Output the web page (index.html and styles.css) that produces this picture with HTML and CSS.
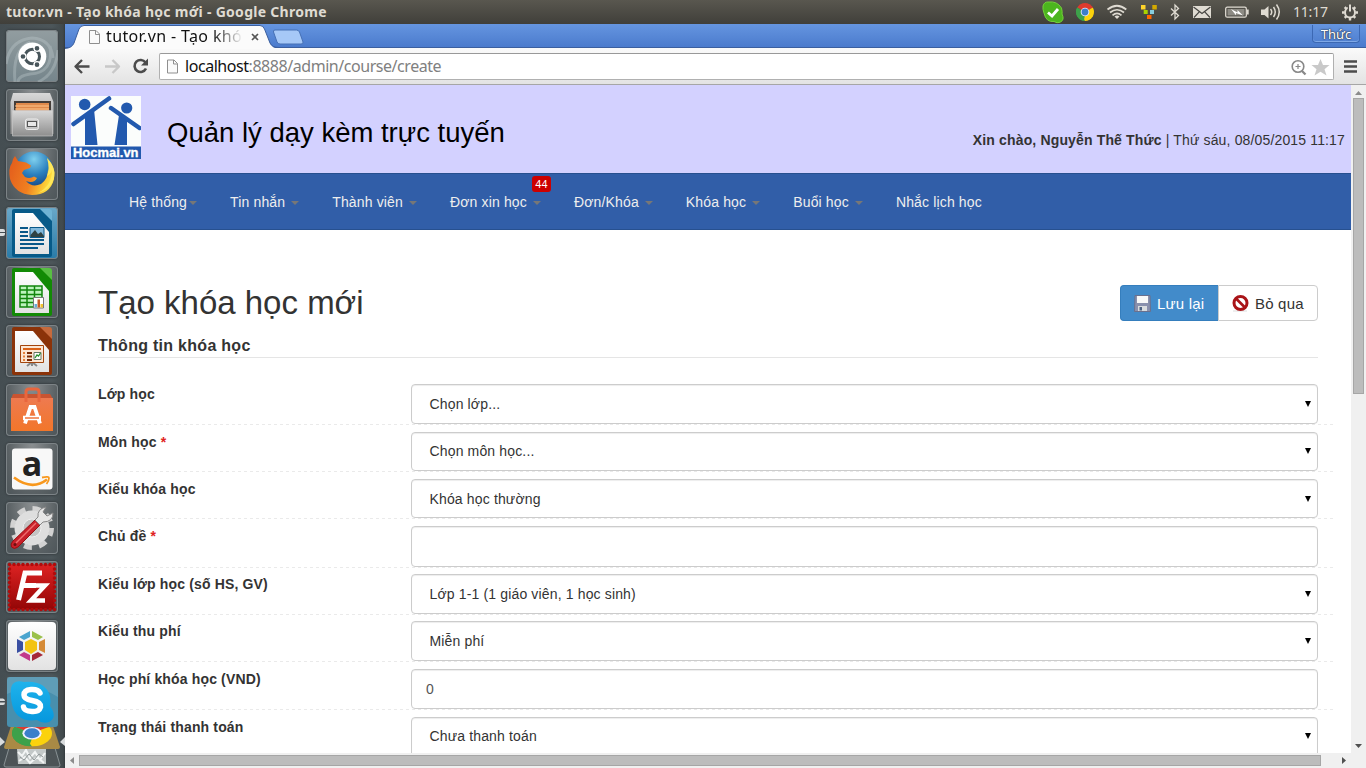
FILE: index.html
```html
<!DOCTYPE html>
<html lang="vi">
<head>
<meta charset="utf-8">
<title>tutor.vn - Tạo khóa học mới</title>
<link rel="stylesheet" href="styles.css">
</head>
<body>
<svg class="defs" width="0" height="0" aria-hidden="true">
  <defs>
    <linearGradient id="gBox" x2="0" y2="1"><stop offset="0" stop-color="#d8d8d8"/><stop offset="1" stop-color="#8e8e8e"/></linearGradient>
    <linearGradient id="gPaper" x2="0" y2="1"><stop offset="0" stop-color="#fff"/><stop offset="1" stop-color="#e2e2e2"/></linearGradient>
    <radialGradient id="gGlobe" cx=".5" cy=".2" r=".8"><stop offset="0" stop-color="#7fd0ee"/><stop offset=".5" stop-color="#2a7fbe"/><stop offset="1" stop-color="#123a78"/></radialGradient>
    <linearGradient id="gFox" x1="0" y1="0" x2="1" y2=".3"><stop offset="0" stop-color="#e2591c"/><stop offset=".6" stop-color="#f08020"/><stop offset="1" stop-color="#ffdc3c"/></linearGradient>
    <linearGradient id="gBag" x2="0" y2="1"><stop offset="0" stop-color="#ee7a50"/><stop offset="1" stop-color="#f2762a"/></linearGradient>
    <linearGradient id="gSkype" x2="0" y2="1"><stop offset="0" stop-color="#1fb3ec"/><stop offset="1" stop-color="#0697dd"/></linearGradient>
    <linearGradient id="gRed" x2="0" y2="1"><stop offset="0" stop-color="#d22"/><stop offset="1" stop-color="#930606"/></linearGradient>
    <symbol id="page" viewBox="0 0 11 14"><path d="M.5 .5H7L10.500 4V13.500H.5Z" fill="#fafafa" stroke="#8f8f8f"/><path d="M6.500 .5V4.500H10.500" fill="none" stroke="#8f8f8f"/></symbol>
    <symbol id="chrome" viewBox="0 0 20 20">
      <path d="M10 10L1.340 5A10 10 0 0 1 18.660 5Z" fill="#dd3a2e"/>
      <path d="M10 10L18.660 5A10 10 0 0 1 10 20Z" fill="#fbd20c"/>
      <path d="M10 10V20A10 10 0 0 1 1.340 5Z" fill="#3da14a"/>
      <path d="M10 5.500H18.900L18 4H9Z" fill="#dd3a2e"/><path d="M6 12L10 20L14 12Z" fill="#fbd20c"/><path d="M1.300 5L6 12.500L10 14L8.500 19.800A10 10 0 0 1 1.300 5Z" fill="#3da14a"/>
      <circle cx="10" cy="10" r="4.800" fill="#eef"/><circle cx="10" cy="10" r="3.800" fill="#3b7fca"/>
    </symbol>
  </defs>
</svg>

<header class="panel">
  <div class="panel-title">tutor.vn - Tạo khóa học mới - Google Chrome</div>
  <div class="tray">
    <svg width="252" height="24" viewBox="0 0 252 24">
      <path d="M7 6Q8 1.500 13 2Q21 1 25.500 8Q26.500 12 26 14Q29 20 24 22.300Q21 23.500 18 21.500Q10 22.500 8 13Q6.500 9 7 6Z" fill="#4cb51e" stroke="#73d03a"/>
      <path d="M12 12.500L16 16L22 9" fill="none" stroke="#fff" stroke-width="2.800"/>
      <use href="#chrome" x="40" y="3" width="18" height="18"/>
      <g fill="none" stroke="#dfdbd2" stroke-width="1.700"><path d="M71.500 9.500Q81 2 90.300 9.500"/><path d="M74 12.500Q81 7 88 12.500"/><path d="M76.500 15.300Q81 11.500 85.500 15.300"/></g>
      <path d="M78.500 16.500Q81 14.700 83.500 16.500L81 19Z" fill="#dfdbd2"/>
      <g><path d="M105 5h4.500v4.500h-4.500z" fill="#ffd42a"/><path d="M116.300 5h4.500v4.500h-4.500z" fill="#d4aa00"/><path d="M107.700 10h4v4h-4z" fill="#aad400"/><path d="M114 10h4v4h-4z" fill="#87cdde"/><path d="M111 15h4.500v4h-4.500z" fill="#ff6600"/></g>
      <path d="M135 8.500L142.500 15.500L139 19V5L142.500 8.500L135 15.500" fill="none" stroke="#dfdbd2" stroke-width="1.300"/>
      <path d="M157 6h18v12h-18z" fill="#dfdbd2"/><path d="M157.500 7L166 13.500L174.500 7M158 17.500L163.500 11.700M174 17.500L168.500 11.700" fill="none" stroke="#454440" stroke-width="1.200"/>
      <rect x="189.700" y="7.200" width="20.600" height="10" rx="1.500" fill="none" stroke="#dfdbd2" stroke-width="1.300"/><path d="M191.500 9h17v6.500h-17z" fill="#8d8b84"/><path d="M211 9.500h1.700v5H211z" fill="#dfdbd2"/><path d="M195 9L201.500 12.500V10L207 15.500L200 13V15.200Z" fill="#fff"/>
      <path d="M225 9.500h3.500L232.500 6v12.500L228.500 15H225z" fill="#dfdbd2"/><path d="M234.500 9Q237 12 234.500 15M237.500 7Q241 12 237.500 17M240.500 4.500Q246 12 240.500 19.500" fill="none" stroke="#dfdbd2" stroke-width="1.500"/>
    </svg>
    <span class="clock">11:17</span>
    <svg class="gear" width="16" height="18" viewBox="0 0 16 18"><circle cx="8" cy="9.500" r="5" fill="none" stroke="#dfdbd2" stroke-width="2"/><g stroke="#dfdbd2" stroke-width="2.400"><path d="M2.700 4.200L4.200 5.700M13.300 4.200L11.800 5.700M0 9.500H2.500M13.500 9.500H16M2.700 14.800L4.200 13.300M13.300 14.800L11.800 13.300M8 15V17.500"/></g><path d="M8 3V8" stroke="#4c4a45" stroke-width="4.500"/><path d="M8 1.500V8.500" stroke="#dfdbd2" stroke-width="2"/></svg>
  </div>
</header>

<div class="desktop">
  <aside class="launcher">
    <svg class="tile tile-home" viewBox="0 0 52 52"><g fill="none" stroke="#c3cdd0" stroke-width="3" opacity=".35"><path d="M0 34Q4 10 26 8Q45 9 47 28"/><path d="M9 52Q6 20 24 12"/><path d="M44 16Q48 43 24 44Q12 46 12 52"/><path d="M52 20Q50 44 32 52"/></g><circle cx="26.300" cy="26.500" r="14" fill="#fff"/><circle cx="26.300" cy="26.500" r="7.200" fill="none" stroke="#48555a" stroke-width="3"/><g fill="#48555a" stroke="#fff" stroke-width="1.300"><circle cx="17" cy="26.500" r="3"/><circle cx="31" cy="18.300" r="3"/><circle cx="31" cy="34.700" r="3"/></g></svg>
    <svg class="tile" viewBox="0 0 52 52"><path d="M7 4H44L47.500 13V45H4.500V13Z" fill="url(#gBox)"/><path d="M8 12h37v10H8z" fill="#443d38"/><path d="M10 14h33v8H10z" fill="#e08a4b"/><path d="M9 17h34M9 20h34" stroke="#ffc88d"/><path d="M6.500 21.500h40v25.500h-40z" fill="url(#gBox)" stroke="#ccc" stroke-width=".6"/><rect x="19.500" y="30" width="13" height="10.500" rx="2" fill="#c5c5c5" stroke="#eee"/><rect x="21.500" y="32.500" width="9" height="5" fill="#e8e8e8" stroke="#555"/></svg>
    <svg class="tile" viewBox="0 0 52 52"><circle cx="28" cy="23" r="19.500" fill="url(#gGlobe)"/><path d="M9 8L12 13L20 14.500L25 17.500L24 20L18 22L16 25L19 29Q24 31 28 28.500L31 30Q28 36 20 33Q26 40 35 36Q42 31 42 22L44 25Q46 18 41 10Q50 19 48 31Q44 47 26 47Q9 46 4 31Q2 20 6 15Q7 10 9 8Z" fill="url(#gFox)"/><path d="M41 10Q44 20 41 28Q45 26 46 22Q46 38 32 45Q49 40 48.500 24Q47 16 41 10Z" fill="#ffe75a"/></svg>
    <svg class="tile tile-writer" viewBox="0 0 52 52"><path d="M6 4Q6 2 8 2H35L46 13V48Q46 50 44 50H8Q6 50 6 48Z" fill="#075a88"/><path d="M34 2H43Q46 2 46 5V14Z" fill="#6fb3d4"/><path d="M9 6H27L43 25V47H9Z" fill="url(#gPaper)"/><path d="M14 21h8M14 25h8M14 29h8M14 33h24M14 37h24M14 41h18" stroke="#095889" stroke-width="2"/><path d="M24 20.500h14v10H24z" fill="#82b9dc" stroke="#095889"/><path d="M24.500 30V28L29 23L32 27L35 25L38 29V30Z" fill="#2f4243"/></svg>
    <svg class="tile" viewBox="0 0 52 52"><path d="M6 4Q6 2 8 2H35L46 13V48Q46 50 44 50H8Q6 50 6 48Z" fill="#128a05"/><path d="M34 2H43Q46 2 46 5V14Z" fill="#58be43"/><path d="M9 6H27L43 25V47H9Z" fill="url(#gPaper)"/><path d="M14 20h22v21H14z" fill="#bdf3bd"/><path d="M14 20h22v21H14zM14 24h22M14 28.500h22M14 32.500h22M14 36.500h22M21 20v21M28.500 20v21" fill="none" stroke="#12850c" stroke-width="1.500"/><path d="M27.500 31.500h10v10.500h-10z" fill="#fff" stroke="#777"/><path d="M28.500 38h2.500v3.500h-2.500z" fill="#68acd5"/><path d="M31.500 33.500h2.500v8h-2.500z" fill="#c85b23"/><path d="M34.500 38h2.500v3.500h-2.500z" fill="#f3c330"/></svg>
    <svg class="tile" viewBox="0 0 52 52"><path d="M6 4Q6 2 8 2H35L46 13V48Q46 50 44 50H8Q6 50 6 48Z" fill="#8b3309"/><path d="M34 2H43Q46 2 46 5V14Z" fill="#c66a3c"/><path d="M9 6H27L43 25V47H9Z" fill="url(#gPaper)"/><path d="M21 41L26 37L31 41M26 36v5" fill="none" stroke="#888" stroke-width="2"/><path d="M14.500 20.500h23v17h-23z" fill="#fce6d3" stroke="#a3450d"/><path d="M17 24h18" stroke="#da6117" stroke-width="2"/><path d="M17 28h2M17 31.500h2M17 35h2" stroke="#e5813a" stroke-width="2"/><path d="M21 28h5M21 31.500h5M21 35h5" stroke="#7c2c05" stroke-width="2"/><path d="M28 27.500h7v7h-7z" fill="#fff" stroke="#676"/><path d="M29 33L31 30L32.500 31L34.500 28" fill="none" stroke="#27922c" stroke-width="1.300"/></svg>
    <svg class="tile" viewBox="0 0 52 52"><path d="M7 10H44L47 15H5Z" fill="#c95431"/><path d="M5 14H47V47H5Z" fill="url(#gBag)"/><path d="M20 18V8Q20 5 23 5H30Q33 5 33 8V18" fill="none" stroke="#e9663d" stroke-width="3"/><path d="M19 39.500L24.500 23H28.500L34 39.500" fill="none" stroke="#fff" stroke-width="3.800"/><path d="M17 34H35" stroke="#fff" stroke-width="4.500"/><path d="M19 34h14" stroke="#ef743c" stroke-width="1.400"/></svg>
    <svg class="tile" viewBox="0 0 52 52"><rect x="6" y="5.500" width="40.500" height="41" rx="3" fill="#f8f8f8"/><text class="amazon-a" x="26" y="33" text-anchor="middle">a</text><path d="M8 34.500Q26 48 41 36.500" fill="none" stroke="#f8981d" stroke-width="2.700"/><path d="M36 34.500Q43 33 43 35Q43 38 40.500 41" fill="none" stroke="#f8981d" stroke-width="1.800"/></svg>
    <svg class="tile" viewBox="0 0 52 52"><circle cx="26" cy="26" r="19.500" fill="none" stroke="#d2d2d2" stroke-width="5" stroke-dasharray="8 7.300"/><circle cx="26" cy="26" r="13" fill="none" stroke="#dedede" stroke-width="9"/><circle cx="26" cy="26" r="9" fill="#c4c4c4" stroke="#efefef"/><path d="M7 39L29 18L34 23L12 45Q8 48 5.500 45Q4 42 7 39Z" fill="#c8202a" stroke="#911"/><path d="M10 41L30 21" stroke="#ef6d6d" stroke-width="1.500"/><path d="M29 18L32 15Q31 7 40 5L37 10L41 14L47 11Q47 20 37 20L34 23Z" fill="#e6e6e6" stroke="#888"/><circle cx="9" cy="42.500" r="1.500" fill="#6d1111"/></svg>
    <svg class="tile" viewBox="0 0 52 52"><rect x="3.500" y="3.500" width="45" height="45" fill="url(#gRed)"/><rect x="3.500" y="3.500" width="45" height="45" fill="none" stroke="#b00b0b" stroke-width="3.500" stroke-linecap="round" stroke-dasharray="0 4.500"/><path d="M12.500 39L19 12H36M17 24.500H30" fill="none" stroke="#fff" stroke-width="5"/><path d="M24 24.500H39L25 39.500H39" fill="none" stroke="#fff" stroke-width="4.500"/></svg>
    <svg class="tile" viewBox="0 0 52 52"><rect x="2" y="2" width="48" height="48" rx="4" fill="url(#gPaper)"/><path d="M25 19L31 22V30L25 34L19 30V22Z" fill="#f3c313"/><path d="M24 11V17L18 20L13 17Z" fill="#4ba5cf"/><path d="M26 11V17L32 20L37 17Z" fill="#9bc14b"/><path d="M11 19L17 22V30L11 33Z" fill="#3a4fa2"/><path d="M39 19L33 22V30L39 33Z" fill="#d58a36"/><path d="M24 41V35L18 32L13 35Z" fill="#c23a8c"/><path d="M26 41V35L32 32L37 35Z" fill="#a52839"/></svg>
    <svg class="stack" width="65" height="91" viewBox="0 0 65 91">
      <path d="M9 71H55L60 88Q60 90 58 90H6Q4 90 4 88Z" fill="#4d5457" stroke="#899194"/><path d="M17 72H46V87H18Z" fill="#c3c8c8"/><path d="M18 75L22 79L26 73L30 81L35 75L40 83L45 76M19 84L25 80L30 86L37 80L44 86" fill="none" stroke="#f3f5f5" stroke-width="2"/><path d="M20 80L24 83L29 77L34 83L39 77L43 80" fill="none" stroke="#8e9596"/>
      <path d="M11 49H53L60 70Q60 72 58 72H6Q4 72 4 70Z" fill="#a98a45"/><svg x="12" y="43" width="40" height="26.500" viewBox="0 0 20 20" preserveAspectRatio="none"><use href="#chrome" width="20" height="20"/></svg>
      <rect x="7" y="0" width="51" height="50" rx="3" fill="#488fad"/><path d="M7 0H58V20Q34 4 7 17Z" fill="#fff" opacity=".13"/>
      <path d="M11 11Q13 2 24 5Q45 3 50 19Q51 25 50 29Q58 40 49 45Q43 47 37 43Q16 46 12 27Q10 18 11 11Z" fill="url(#gSkype)"/><path d="M40 16Q38 12 31 12.500Q24 13 24 18Q24 22 32 23.500Q41 25 40.500 30Q39 35 32 34.500Q24 34 23.500 30" fill="none" stroke="#fff" stroke-width="5.500" stroke-linecap="round"/>
      <path d="M0 21.500H3Q5 22 5 24H0ZM0 25.500H5Q5 28 3 28H0ZM0 60L5 65L0 69ZM65 60L60 65L65 69Z" fill="#d9dcdd"/>
    </svg>
    <i class="running"></i>
  </aside>

  <main class="browser">
    <div class="tabstrip">
      <div class="tab">
        <svg class="tab-shape" width="245" height="25" viewBox="0 0 245 25"><path d="M0 25V24.500Q7 24 9 19L14 5Q15.500 1.500 19 1.500H195Q198 1.500 199.500 5L205 19Q207 24.500 214 24.500V25Z" fill="#fbfbfb"/><path d="M0 24.500Q7 24 9 19L14 5Q15.500 1.500 19 1.500H195Q198 1.500 199.500 5L205 19Q207 23.500 214 23.500" fill="none" stroke="#3b5f9f"/><path d="M210 6Q208 6 208.500 8L212 18Q213 20 215 20H236Q238.500 20 238 18L234.500 8Q233.500 6 231.500 6Z" fill="#a6c8f7" stroke="#4670b5"/></svg>
        <svg class="tab-page" width="11" height="14"><use href="#page"/></svg>
        <span class="tab-text">tutor.vn - Tạo khóa</span>
        <svg class="tab-close" width="8" height="8" viewBox="0 0 8 8"><path d="M1 1L7 7M7 1L1 7" stroke="#555" stroke-width="1.700"/></svg>
      </div>
      <div class="profile">Thức</div>
    </div>
    <div class="toolbar">
      <svg width="94" height="36" viewBox="0 0 94 36"><path d="M24.500 18.500H11M17 12L10.500 18.500L17 25" fill="none" stroke="#4c4c4c" stroke-width="2.400" stroke-linejoin="round"/><path d="M40 18.500H53M47.500 12L54 18.500L47.500 25" fill="none" stroke="#c8c8c8" stroke-width="2.400" stroke-linejoin="round"/><path d="M80.500 14.500A6 6 0 1 0 81 20.500" fill="none" stroke="#4c4c4c" stroke-width="2.600"/><path d="M76 17.500H83V10.500Z" fill="#4c4c4c"/></svg>
      <div class="omnibox">
        <svg class="url-page" width="11" height="15"><use href="#page"/></svg>
        <span class="url">localhost<em>:8888/admin/course/create</em></span>
        <svg class="omni-icons" width="40" height="20" viewBox="0 0 40 20"><circle cx="7" cy="8.500" r="5.800" fill="none" stroke="#888" stroke-width="1.600"/><path d="M11 13L14.500 16.500" stroke="#888" stroke-width="2.300"/><path d="M4.500 8.500H9.500M7 6V11" stroke="#888" stroke-width="1.200"/><path d="M29.500 1L32 7H38.500L33.500 11.200L35.500 17.500L29.500 13.700L23.500 17.500L25.500 11.200L20.500 7H27Z" fill="#c9c9c9"/></svg>
      </div>
      <svg class="menu" width="13" height="14" viewBox="0 0 13 14"><path d="M0 1.500H13M0 6.500H13M0 11.500H13" stroke="#4c4c4c" stroke-width="2.600"/></svg>
    </div>

    <div class="viewport">
      <div class="page">
        <div class="banner">
          <svg class="logo" width="70" height="63" viewBox="0 0 70 63"><path d="M0 0h70v63H0z" fill="#fbfdfc"/><g fill="#2259ae"><circle cx="13.700" cy="8.500" r="5.800"/><path d="M14 19L23 13L26.500 49H14ZM48 19L56 22.500V49H43.500Z"/><circle cx="55.700" cy="12" r="5.600"/><path d="M0 50.500h70V63H0z"/></g><path d="M2.500 28L38 2.500M40 12L68.500 32" stroke="#2259ae" stroke-width="4.500" stroke-linecap="round"/><text class="logo-text" x="2" y="60.500" textLength="65.500" lengthAdjust="spacingAndGlyphs">Hocmai.vn</text></svg>
          <div class="site-title">Quản lý dạy kèm trực tuyến</div>
          <div class="greeting"><b>Xin chào, Nguyễn Thế Thức</b> | Thứ sáu, 08/05/2015 11:17</div>
        </div>
        <nav class="nav">
          <a class="tight">Hệ thống<i></i></a><a>Tin nhắn<i></i></a><a>Thành viên<i></i></a><a>Đơn xin học<i></i><span class="badge">44</span></a><a>Đơn/Khóa<i></i></a><a>Khóa học<i></i></a><a>Buổi học<i></i></a><a>Nhắc lịch học</a>
        </nav>
        <section class="content">
          <div class="heading">
            <h1>Tạo khóa học mới</h1>
            <div class="actions">
              <button class="save"><svg width="17" height="17" viewBox="0 0 17 17"><path d="M1 0.500H16L16.500 16.500H.5Z" fill="#8990ad" stroke="#69708e"/><path d="M3 1H14V8H3Z" fill="#f8f8f8"/><path d="M4 11H13V16H4Z" fill="#d9dcdf"/><path d="M5.500 12H8V15.500H5.500Z" fill="#4c6283"/></svg>Lưu lại</button><button class="cancel"><svg width="17" height="17" viewBox="0 0 17 17"><path d="M1 16H15" stroke="#ddd"/><circle cx="8.500" cy="8" r="6.500" fill="#fff" stroke="#a91418" stroke-width="3"/><path d="M4 3.500L13 12.500" stroke="#a91418" stroke-width="2.600"/></svg>Bỏ qua</button>
            </div>
          </div>
          <h2>Thông tin khóa học</h2>
          <div class="form">
            <div class="row"><label>Lớp học</label><div class="field select">Chọn lớp...</div></div>
            <div class="row"><label>Môn học <b>*</b></label><div class="field select high">Chọn môn học...</div></div>
            <div class="row"><label>Kiểu khóa học</label><div class="field select">Khóa học thường</div></div>
            <div class="row"><label>Chủ đề <b>*</b></label><div class="field"></div></div>
            <div class="row raised"><label>Kiểu lớp học (số HS, GV)</label><div class="field select">Lớp 1-1 (1 giáo viên, 1 học sinh)</div></div>
            <div class="row raised"><label>Kiểu thu phí</label><div class="field select">Miễn phí</div></div>
            <div class="row"><label>Học phí khóa học (VND)</label><div class="field input">0</div></div>
            <div class="row"><label>Trạng thái thanh toán</label><div class="field select high">Chưa thanh toán</div></div>
          </div>
        </section>
      </div>
      <div class="vbar"><svg width="15" height="13"><path d="M4 10L7.500 6L11 10Z" fill="#8b8b8b"/></svg><div class="vthumb"></div><svg class="end" width="15" height="13"><path d="M4 4H11L7.500 8Z" fill="#505050"/></svg></div>
      <div class="hbar"><svg width="14" height="15"><path d="M9 4V11L5 7.500Z" fill="#8b8b8b"/></svg><div class="hthumb"></div><svg class="end" width="14" height="15"><path d="M5 4V11L9 7.500Z" fill="#505050"/></svg></div>
      <div class="corner"></div>
    </div>
  </main>
</div>
</body>
</html>
```
FILE: styles.css
```css
* { box-sizing: border-box; }
body { margin: 0; width: 1366px; height: 768px; overflow: hidden; font: 14px/20px "Liberation Sans", Arial, sans-serif; color: #333; background: #fff; }
svg { display: block; flex: none; }
.defs { position: absolute; }

.panel { height: 24px; display: flex; justify-content: space-between; background: linear-gradient(#59574f, #403f3a); color: #dfdbd2; font-family: "Noto Sans", sans-serif; }
.panel-title { padding-left: 6px; font-size: 14px; font-weight: 700; line-height: 23px; letter-spacing: .29px; white-space: nowrap; }
.tray { display: flex; width: 330px; }
.clock { width: 49px; padding-left: 5px; font-size: 14px; line-height: 24px; letter-spacing: -.2px; }
.gear { margin: 3px 0 0 5px; }

.desktop { display: flex; height: 744px; }
.launcher { position: relative; width: 65px; display: flex; flex-direction: column; align-items: center; gap: 7px; padding: 6px 1px 0 0; background: linear-gradient(90deg, #454e52, #4c565a 80%, #41494c 97%, #333a3d); }
.tile { width: 52px; height: 52px; border-radius: 4px; background: radial-gradient(ellipse at 50% 0, #8b8f91, #5b6265 65%, #4d5559); box-shadow: inset 0 0 0 1px #7c8386, 0 0 2px 1px #3a4144; }
.tile-home { background: linear-gradient(#929da0, #75858b); }
.tile-writer { background: linear-gradient(#6aa8c9, #297ba8); }
.stack { margin: -2px -1px 0 0; align-self: flex-start; }
.running { position: absolute; left: 0; top: 205px; width: 5px; height: 7px; background: linear-gradient(#d9dcdd 0 3px, transparent 3px 4px, #d9dcdd 4px); border-radius: 0 2px 2px 0; }
.amazon-a { font: 700 34px/1 "Open Sans", sans-serif; fill: #222; }

.browser { width: 1301px; display: flex; flex-direction: column; }
.tabstrip { height: 24px; display: flex; justify-content: space-between; background: linear-gradient(#6595e0, #4b7bcd); border-bottom: 1px solid #3b5f9f; }
.tab { position: relative; width: 245px; height: 25px; display: flex; align-items: flex-start; }
.tab-shape { position: absolute; left: 0; top: 0; }
.tab-page { position: relative; margin: 6px 0 0 24px; }
.tab-text { position: relative; width: 137px; margin-left: 6px; overflow: hidden; white-space: nowrap; font: 16px/24px "Noto Sans", sans-serif; letter-spacing: .37px; color: #111; -webkit-mask-image: linear-gradient(90deg, #000 78%, transparent); mask-image: linear-gradient(90deg, #000 78%, transparent); }
.tab-close { position: relative; margin: 9px 0 0 8px; }
.profile { width: 48px; height: 18px; margin: 1px 6px 0 0; border: 1px solid #3c68b3; border-top: 0; border-radius: 0 0 4px 4px; box-shadow: inset 0 -1px #7fa8e6; text-align: center; color: #fff; font: 13px/19px "Noto Sans", sans-serif; text-shadow: 0 0 2px #222, 0 0 1px #222; }
.toolbar { height: 37px; display: flex; background: linear-gradient(#fafafa, #e3e3e3); border-bottom: 1px solid #a6a6a6; }
.omnibox { display: flex; width: 1175px; height: 27px; margin-top: 5px; border: 1px solid #b0b0b0; border-top-color: #999; border-radius: 2px; background: #fff; }
.url-page { margin: 5px 0 0 7px; }
.url { flex: 1; margin-left: 7px; font: 16px/25px "Noto Sans", sans-serif; letter-spacing: -.45px; color: #111; }
.url em { font-style: normal; color: #808080; }
.omni-icons { margin: 4px 2px 0 0; }
.menu { margin: 12px 0 0 10px; }

.viewport { flex: 1; min-height: 0; display: grid; grid-template: 668px 15px / 1286px 15px; }
.page { overflow: hidden; background: #fff; letter-spacing: .15px; }
.banner { height: 88px; display: flex; background: #d3d1ff; }
.logo { margin: 11px 0 0 6px; }
.logo-text { font: 700 12px "Liberation Sans", Arial, sans-serif; letter-spacing: 0; fill: #fff; stroke: #fff; stroke-width: .3px; }
.site-title { margin: 29px 0 0 26px; font-size: 27.5px; line-height: 38px; letter-spacing: 0; color: #000; white-space: nowrap; }
.greeting { margin: 45px 6px 0 auto; white-space: nowrap; }
.nav { height: 57px; display: flex; gap: 33px; padding: 18px 0 0 64px; border: solid #27508f; border-width: 1px 0; background: #315ea8; color: #eee; }
.nav a { position: relative; display: flex; align-items: center; height: 20px; white-space: nowrap; }
.nav i { margin: 2px 0 0 6px; border: 4px solid transparent; border-top-color: #777; border-bottom: 0; }
.nav .tight i { margin-left: 2px; }
.badge { position: absolute; right: -10px; top: -16px; width: 19px; height: 16px; border-radius: 3px; background: #c00; color: #fff; font-size: 11px; line-height: 16px; text-align: center; }
.content { padding: 55px 33px 0; }
.heading { display: flex; justify-content: space-between; height: 50px; }
h1 { margin: 0; font-size: 33px; line-height: 36px; font-weight: 400; letter-spacing: 0; }
.actions { display: flex; height: 36px; }
.actions button { display: flex; align-items: center; gap: 6px; padding: 1px 0 0 13px; border: 1px solid #ccc; font: 15px/20px "Liberation Sans", Arial, sans-serif; letter-spacing: .2px; color: #333; background: #fff; white-space: nowrap; }
.actions svg { margin-top: -1px; }
.actions .save { width: 98px; border-color: #357ebd; border-right: 0; border-radius: 4px 0 0 4px; background: #428bca; color: #fff; }
.actions .cancel { width: 100px; border-radius: 0 4px 4px 0; }
h2 { margin: 0; height: 23px; border-bottom: 1px solid #e5e5e5; font-size: 16px; line-height: 21px; letter-spacing: .28px; }
.form { display: grid; grid-template-rows: 48px 47px 47px 49px 47px 47px 48px 48px; margin: 19px -17px 0 -16px; }
.row { display: flex; padding: 7px 17px 1px 16px; background: repeating-linear-gradient(90deg, #eaeaea 0 3px, transparent 3px 6px) left bottom / 100% 1px no-repeat; }
.raised { padding-top: 6px; }
.row label { width: 313px; font-weight: 700; }
.row label b { color: #e02222; }
.field { flex: 1; display: flex; align-items: center; border: 1px solid #ccc; border-radius: 4px; padding-left: 17.500px; box-shadow: inset 0 1px 1px rgba(0,0,0,.075); background: #fff; color: #333; }
.high { padding-bottom: 2px; }
.input { padding-left: 14px; color: #555; }
.select::after { content: ""; margin: 0 6px 0 auto; border: 3.5px solid transparent; border-top: 6px solid #000; border-bottom: 0; }
.vbar { display: flex; flex-direction: column; background: #f0f0f0; }
.vthumb { width: 11px; height: 296px; margin-left: 2px; border: 1px solid #a6a6a6; background: #bcbcbc; }
.vbar .end { margin-top: auto; }
.hbar { display: flex; background: #f0f0f0; }
.hthumb { width: 1242px; height: 11px; margin-top: 2px; border: 1px solid #a6a6a6; background: #bcbcbc; }
.hbar .end { margin-left: auto; }
.corner { background: #f0f0f0; }
```
